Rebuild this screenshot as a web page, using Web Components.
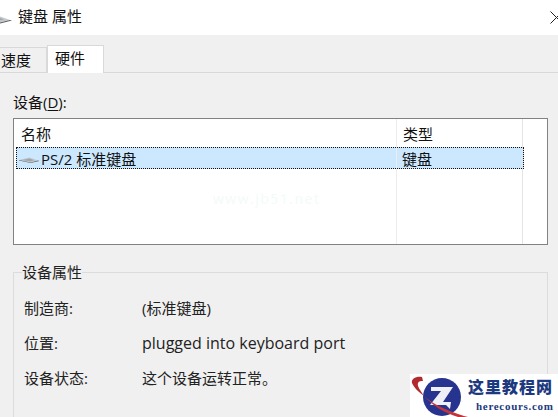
<!DOCTYPE html>
<html lang="zh">
<head>
<meta charset="utf-8">
<title>键盘 属性</title>
<style>
    html, body {
        margin: 0;
        height: 417px;
        overflow: hidden;
        background-color: #f0f0f0;
        color: #1a1a1a;
        font: 15px "Open Sans", "Noto Sans CJK SC", sans-serif;
    }
</style>
</head>
<body>
<dialog-window>
    <title-bar slot="title">键盘 属性</title-bar>
    <tab-strip slot="tabs"></tab-strip>
    <device-list slot="list"></device-list>
    <device-props slot="props"></device-props>
    <site-badge slot="badge"></site-badge>
</dialog-window>

<script>
const KEYBOARD_ICON = `
    <svg width="34" height="10" viewBox="0 0 34 10">
        <path d="M0 5 L17 1 L31 6 L19 9 Z" fill="#c4c7cb"/>
        <path d="M0 5 L19 9 L31 6 L33 6.5 L19 10 L0 6 Z" fill="#565b60"/>
        <path d="M5 5 L17 2.5 L25 5.5 L18 7 Z" fill="#a3a7ac"/>
    </svg>`;

class DialogWindow extends HTMLElement {
    constructor() {
        super();
        this.attachShadow({mode: "open"});
        this.shadowRoot.innerHTML = `
            <style>
                :host {
                    display: flex;
                    flex-direction: column;
                    position: relative;
                    width: 558px;
                    height: 417px;
                    overflow: hidden;
                }
                .page {
                    display: flex;
                    flex-direction: column;
                    padding: 20px 10px 0 13px;
                }
            </style>
            <slot name="title"></slot>
            <slot name="tabs"></slot>
            <div class="page">
                <slot name="list"></slot>
                <slot name="props"></slot>
            </div>
            <slot name="badge"></slot>
        `;
    }
}
customElements.define("dialog-window", DialogWindow);

class TitleBar extends HTMLElement {
    constructor() {
        super();
        this.attachShadow({mode: "open"});
        this.shadowRoot.innerHTML = `
            <style>
                :host {
                    display: flex;
                    flex: none;
                    align-items: center;
                    height: 35px;
                    background-color: white;
                    color: #111;
                    font-size: 15px;
                    overflow: hidden;
                }
                .icon {
                    display: flex;
                    width: 18px;
                    margin-top: 3px;
                    flex: none;
                }
                svg.kb {
                    margin-left: -21px;
                    flex: none;
                }
                .text {
                    flex-grow: 1;
                    margin-top: -4px;
                }
                svg.close {
                    margin: -1px -1px 0 0;
                    flex: none;
                }
            </style>
            <div class="icon">${KEYBOARD_ICON.replace("<svg", '<svg class="kb"')}</div>
            <div class="text"><slot></slot></div>
            <svg class="close" width="9" height="13" viewBox="0 0 9 13">
                <path d="M0.5 0.5 L6.5 6.5 L0.5 12.5 M6.5 6.5 L9 4 M6.5 6.5 L9 9" fill="none" stroke="#222" stroke-width="1"/>
            </svg>
        `;
    }
}
customElements.define("title-bar", TitleBar);

class TabStrip extends HTMLElement {
    constructor() {
        super();
        this.attachShadow({mode: "open"});
        this.shadowRoot.innerHTML = `
            <style>
                :host {
                    display: flex;
                    flex: none;
                    align-items: flex-end;
                    height: 38px;
                    box-sizing: border-box;
                    border-bottom: 1px solid #d9d9d9;
                    font-size: 15px;
                }
                .tab {
                    box-sizing: border-box;
                    display: flex;
                    align-items: center;
                    color: #111;
                }
                .off {
                    width: 47px;
                    height: 25px;
                    background-color: #f0f0f0;
                    border-right: 1px solid #d9d9d9;
                    border-top: 1px solid #d9d9d9;
                    padding: 0 0 2px 1px;
                }
                .on {
                    width: 57px;
                    height: 28px;
                    margin-bottom: -1px;
                    background-color: white;
                    border: 1px solid #d9d9d9;
                    border-bottom: none;
                    padding: 0 0 4px 7px;
                }
            </style>
            <div class="tab off">速度</div>
            <div class="tab on">硬件</div>
        `;
    }
}
customElements.define("tab-strip", TabStrip);

class DeviceList extends HTMLElement {
    constructor() {
        super();
        this.attachShadow({mode: "open"});
        this.shadowRoot.innerHTML = `
            <style>
                :host {
                    display: block;
                    flex: none;
                    font-size: 15px;
                    color: #111;
                }
                .caption {
                    height: 25px;
                    line-height: 18px;
                }
                u { text-underline-offset: 2px; }
                .box {
                    position: relative;
                    box-sizing: border-box;
                    width: 535px;
                    height: 127px;
                    background-color: white;
                    border: 1px solid #828282;
                    padding: 0 0 0 2px;
                    overflow: hidden;
                }
                .row {
                    display: grid;
                    grid-template-columns: 380px 128px;
                    width: 508px;
                    box-sizing: border-box;
                }
                .head {
                    height: 28px;
                    align-items: center;
                }
                .head div { height: 100%; display: flex; align-items: center; box-sizing: border-box; }
                .head .name { padding-left: 5px; }
                .head .type { padding-left: 7px; }
                .selected {
                    height: 22px;
                    align-items: center;
                    background-color: #cce8ff;
                    outline: 1px dotted #111;
                    outline-offset: -1px;
                }
                .selected .name { display: flex; align-items: center; margin-left: 1px; }
                .selected .name svg { flex: none; margin: 4px 1px 0 2px; width: 21px; }
                .selected .type { padding-left: 6px; }
                .rules {
                    position: absolute;
                    top: 0;
                    bottom: 0;
                    left: 382px;
                    width: 127px;
                    box-sizing: border-box;
                    border-left: 1px solid #ededed;
                    border-right: 1px solid #e4e4e4;
                    pointer-events: none;
                }
                .mark {
                    position: absolute;
                    left: 199px;
                    top: 70px;
                    color: #f3fafa;
                    font-size: 14px;
                    letter-spacing: 1.5px;
                }
            </style>
            <div class="caption">设备(<u>D</u>):</div>
            <div class="box">
                <div class="rules"></div>
                <div class="row head">
                    <div class="name">名称</div>
                    <div class="type">类型</div>
                </div>
                <div class="row selected">
                    <div class="name">${KEYBOARD_ICON}<span>PS/2 标准键盘</span></div>
                    <div class="type">键盘</div>
                </div>
                <div class="mark">www.jb51.net</div>
            </div>
        `;
    }
}
customElements.define("device-list", DeviceList);

class DeviceProps extends HTMLElement {
    constructor() {
        super();
        this.attachShadow({mode: "open"});
        this.shadowRoot.innerHTML = `
            <style>
                :host {
                    display: block;
                    flex: none;
                    margin-top: 18px;
                    font-size: 15px;
                    color: #222;
                }
                fieldset {
                    margin: 0;
                    padding: 0 0 0 10px;
                    height: 160px;
                    width: 535px;
                    box-sizing: border-box;
                    border: 1px solid #dcdcdc;
                }
                legend {
                    margin-left: -2px;
                    padding: 0;
                    line-height: 18px;
                }
                .rows {
                    display: grid;
                    grid-template-columns: 118px 1fr;
                    grid-auto-rows: 35px;
                    align-items: center;
                    padding-top: 9px;
                }
                .en { font-size: 16px; }
            </style>
            <fieldset>
                <legend>设备属性</legend>
                <div class="rows">
                    <div>制造商:</div><div>(标准键盘)</div>
                    <div>位置:</div><div class="en">plugged into keyboard port</div>
                    <div>设备状态:</div><div>这个设备运转正常。</div>
                </div>
            </fieldset>
        `;
    }
}
customElements.define("device-props", DeviceProps);

class SiteBadge extends HTMLElement {
    constructor() {
        super();
        this.attachShadow({mode: "open"});
        this.shadowRoot.innerHTML = `
            <style>
                :host {
                    position: absolute;
                    left: 410px;
                    top: 374px;
                    width: 148px;
                    height: 43px;
                    background-color: white;
                    display: flex;
                    align-items: flex-start;
                    overflow: hidden;
                }
                svg { flex: none; }
                .words {
                    flex: none;
                    display: flex;
                    flex-direction: column;
                    align-items: flex-start;
                    margin: 3px 0 0 0;
                    white-space: nowrap;
                    color: #1d3a80;
                    font-family: "Noto Sans CJK SC", sans-serif;
                    font-weight: 900;
                }
                .cn { font-size: 16px; line-height: 18px; letter-spacing: 1px; }
                .en {
                    font: bold 11px/14px "Liberation Serif", serif;
                    letter-spacing: 0.7px;
                    margin: 4px 0 0 8px;
                }
            </style>
            <svg width="58" height="43" viewBox="0 0 58 43">
                <path d="M12 3 C6 2 1 5 2 9 C4 14 9 18 14 22 C10 16 7 12 8 9 C9 7 11 7 13 7 Z" fill="#b32a2e"/>
                <ellipse cx="32" cy="23" rx="19" ry="19" fill="#27348f"/>
                <path d="M21 13 H43 L33 28 H41 L40 35 L36 31 H20 L31 17 H21 Z" fill="#eef0f6"/>
                <path d="M14 22 C24 31 38 37 54 42 L58 43 H48 C34 39 22 31 14 22 Z" fill="#c2353a"/>
            </svg>
            <div class="words">
                <span class="cn">这里教程网</span>
                <span class="en">herecours.com</span>
            </div>
        `;
    }
}
customElements.define("site-badge", SiteBadge);
</script>
</body>
</html>
